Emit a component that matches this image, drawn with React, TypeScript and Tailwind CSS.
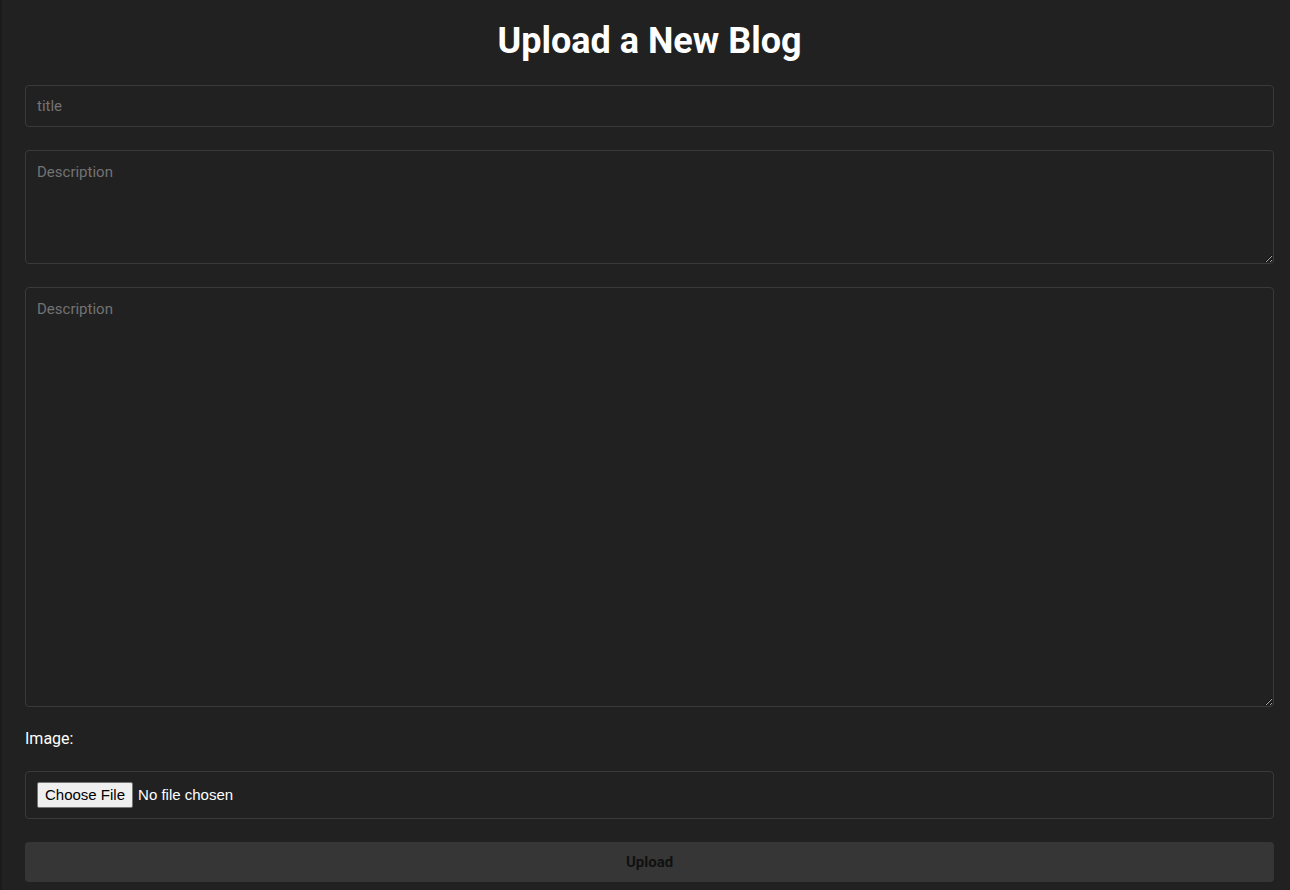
import { useState } from 'react'

export default function App() {
  const [title, setTitle] = useState('')
  const [description, setDescription] = useState('')
  const [content, setContent] = useState('')

  return (
    <div className="min-h-screen bg-[#212121] border-l-2 border-[#1b1b1b] font-['Roboto',sans-serif]">
      <div className="flex flex-col gap-[23px] pl-[23px] pr-[16px] pt-[20px] pb-2">
        <h1 className="text-center text-[36px] leading-[42px] font-bold text-white">Upload a New Blog</h1>

        <input
          type="text"
          value={title}
          onChange={(e) => setTitle(e.target.value)}
          placeholder="title"
          className="h-[42px] w-full rounded border border-[#3a3a3a] bg-[#212121] px-[11px] text-[15px] text-white placeholder:text-[#737373] outline-none"
        />

        {/* short description */}
        <textarea
          value={description}
          onChange={(e) => setDescription(e.target.value)}
          placeholder="Description"
          className="h-[114px] w-full rounded border border-[#3a3a3a] bg-[#212121] px-[11px] py-[10px] text-[15px] text-white placeholder:text-[#737373] outline-none [color-scheme:dark]"
        />

        {/* blog body */}
        <textarea
          value={content}
          onChange={(e) => setContent(e.target.value)}
          placeholder="Description"
          className="h-[420px] w-full rounded border border-[#3a3a3a] bg-[#212121] px-[11px] py-[10px] text-[15px] text-white placeholder:text-[#737373] outline-none [color-scheme:dark]"
        />

        <label className="text-base leading-[18px] text-white">Image:</label>

        <div className="flex h-[48px] items-center rounded border border-[#3a3a3a] px-[11px]">
          <input type="file" className="text-[15px] text-white font-['Liberation_Sans',Arial,sans-serif] file:mr-[5px] file:rounded-[2px] file:border file:border-[#767676] file:bg-[#efefef] file:px-[7px] file:py-[1px] file:text-black" />
        </div>

        <button className="h-[40px] w-full rounded bg-[#363636] text-[15px] font-bold text-[#111]">Upload</button>
      </div>
    </div>
  )
}
